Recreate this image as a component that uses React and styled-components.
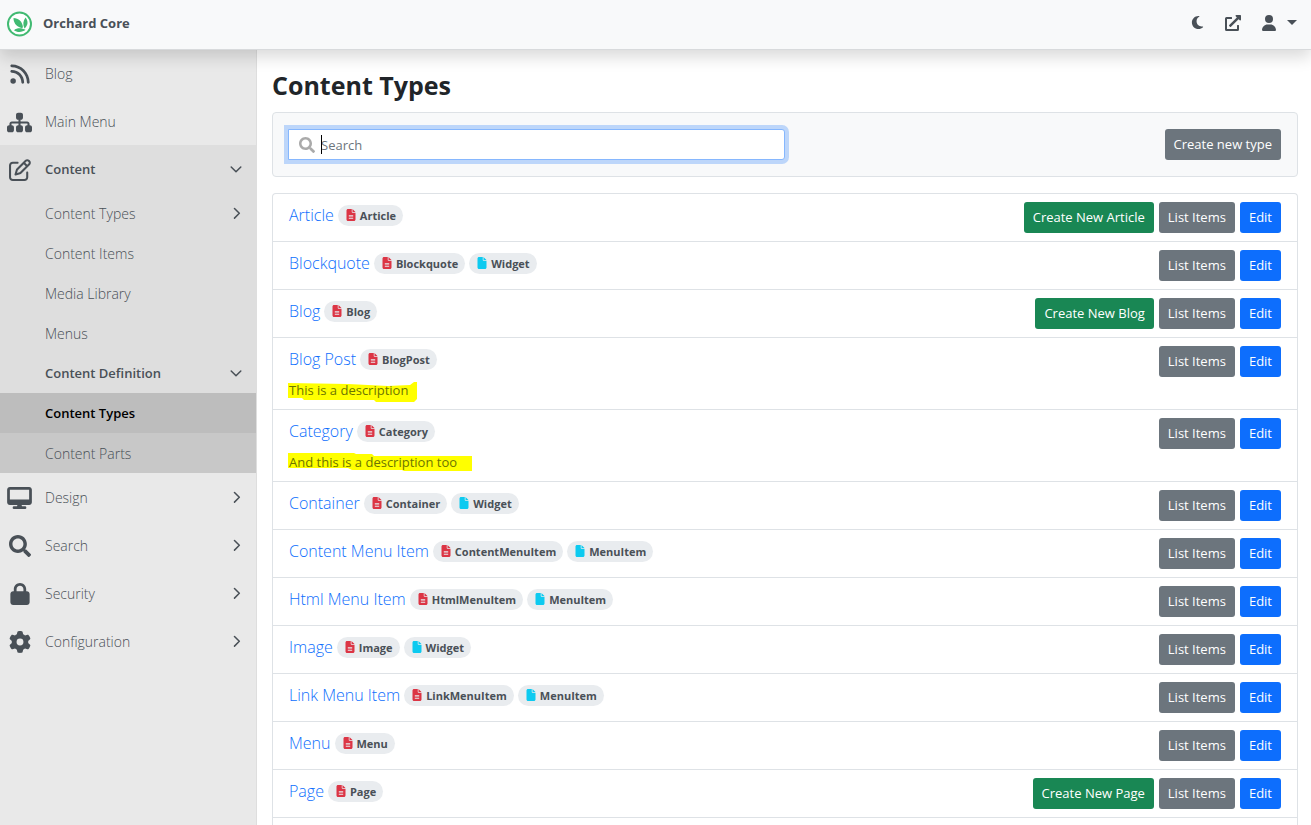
import React from "react";
import styled, { createGlobalStyle } from "styled-components";
import { FaSearch, FaExternalLinkAlt } from "react-icons/fa";
import {
  FaRss,
  FaSitemap,
  FaRegPenToSquare,
  FaLock,
  FaGear,
  FaMoon,
  FaUser,
  FaFile,
  FaFileLines,
} from "react-icons/fa6";

const colors = {
  text: "#212529",
  gray: "#495057",
  border: "#dee2e6",
  blue: "#0d6efd",
  secondary: "#6c757d",
  green: "#198754",
  red: "#dc3545",
  cyan: "#0dcaf0",
  light: "#f8f9fa",
};

const Logo = () => (
  <svg width="26" height="26" viewBox="0 0 26 26" aria-hidden="true">
    <circle cx="12.500" cy="13" r="11.500" fill="#fff" stroke="#41ba72" strokeWidth="2" />
    <path d="M6.500 7c5 0 9 3.500 9.500 9.500-1 .6-2 .5-3 0C9 15 6.500 11.500 6.500 7z" fill="#41ba72" />
    <path d="M18.500 6.500c2.800 3.500 2.800 7.500-1 11-1.800-3.500-1.600-7.500 1-11z" fill="#41ba72" />
    <path d="M7 19.200c2.800-2.600 8-2.600 11.500-.4-3 2.700-8.500 2.900-11.500.4z" fill="#41ba72" />
  </svg>
);

const Desktop = () => (
  <svg width="25" height="22" viewBox="0 0 576 512" fill="currentColor" aria-hidden="true">
    <path
      fillRule="evenodd"
      d="M64 0C28.700 0 0 28.700 0 64v288c0 35.300 28.700 64 64 64h176l-11 32h-69a32 32 0 0 0 0 64h256a32 32 0 0 0 0-64h-69l-11-32h176c35.300 0 64-28.700 64-64V64c0-35.300-28.700-64-64-64H64zM64 64h448v224H64V64z"
    />
  </svg>
);

const Chevron = ({ down }) => (
  <svg width="12" height="12" viewBox="0 0 12 12" fill="none" aria-hidden="true">
    <path
      d={down ? "M1.200 4L6 8.800 10.800 4" : "M4.500 1.500L9.300 6.300l-4.800 4.800"}
      stroke="currentColor"
      strokeWidth="1.500"
      strokeLinecap="round"
      strokeLinejoin="round"
    />
  </svg>
);

const contentLinks = [
  { label: "Content Types", more: true },
  { label: "Content Items" },
  { label: "Media Library" },
  { label: "Menus" },
];

const bottomLinks = [
  { label: "Design", icon: <Desktop /> },
  { label: "Search", icon: <FaSearch size={22} /> },
  { label: "Security", icon: <FaLock size={22} /> },
  { label: "Configuration", icon: <FaGear size={22} /> },
];

const contentTypes = [
  { name: "Article", type: "Article", creatable: true },
  { name: "Blockquote", type: "Blockquote", stereotype: "Widget" },
  { name: "Blog", type: "Blog", creatable: true },
  {
    name: "Blog Post",
    type: "BlogPost",
    description: "This is a description",
    mark: "0,2 60,3 100,5 122,4 126,1 129,1 129,18 126,21 88,21 86,19 16,19 14,17 0,17",
  },
  {
    name: "Category",
    type: "Category",
    description: "And this is a description too",
    mark: "0,0 66,0 68,1 84,1 86,3 184,3 184,18 116,18 114,17 64,17 60,15 0,15",
  },
  { name: "Container", type: "Container", stereotype: "Widget" },
  { name: "Content Menu Item", type: "ContentMenuItem", stereotype: "MenuItem" },
  { name: "Html Menu Item", type: "HtmlMenuItem", stereotype: "MenuItem" },
  { name: "Image", type: "Image", stereotype: "Widget" },
  { name: "Link Menu Item", type: "LinkMenuItem", stereotype: "MenuItem" },
  { name: "Menu", type: "Menu" },
  { name: "Page", type: "Page", creatable: true },
];

const App = () => {
  return (
    <>
      <GlobalStyle />
      <Header>
        <Brand href="#">
          <Logo />
          Orchard Core
        </Brand>
        <HeaderActions>
          <IconButton aria-label="Toggle theme">
            <FaMoon size={15} />
          </IconButton>
          <IconLink href="#" aria-label="Visit site">
            <FaExternalLinkAlt size={16} />
          </IconLink>
          <IconButton aria-label="User menu">
            <FaUser size={16} />
            <svg width="10" height="5" viewBox="0 0 10 5" aria-hidden="true">
              <path d="M0 0h10L5 5z" fill="currentColor" />
            </svg>
          </IconButton>
        </HeaderActions>
      </Header>
      <Body>
        <Sidebar>
          <MenuLink href="#">
            <MenuIcon>
              <FaRss size={22} />
            </MenuIcon>
            <span>Blog</span>
          </MenuLink>
          <MenuLink href="#">
            <MenuIcon>
              <FaSitemap size={25} />
            </MenuIcon>
            <span>Main Menu</span>
          </MenuLink>
          <Group>
            <MenuLink href="#" $bold>
              <MenuIcon>
                <FaRegPenToSquare size={22} />
              </MenuIcon>
              <span>Content</span>
              <Chevron down />
            </MenuLink>
            {contentLinks.map((item) => (
              <SubLink href="#" key={item.label}>
                <span>{item.label}</span>
                {item.more && <Chevron />}
              </SubLink>
            ))}
            <SubLink href="#" $bold>
              <span>Content Definition</span>
              <Chevron down />
            </SubLink>
            <SubGroup>
              <SubLink href="#" $active $bold>
                <span>Content Types</span>
              </SubLink>
              <SubLink href="#">
                <span>Content Parts</span>
              </SubLink>
            </SubGroup>
          </Group>
          {bottomLinks.map((item) => (
            <MenuLink href="#" key={item.label}>
              <MenuIcon>{item.icon}</MenuIcon>
              <span>{item.label}</span>
              <Chevron />
            </MenuLink>
          ))}
        </Sidebar>
        <Main>
          <h1>Content Types</h1>
          <Toolbar>
            <SearchBox>
              <FaSearch size={16} />
              <input type="search" placeholder="Search" aria-label="Search" />
              <Caret />
            </SearchBox>
            <Button>Create new type</Button>
          </Toolbar>
          <List>
            {contentTypes.map((item) => (
              <Row key={item.name}>
                <Info>
                  <Title>
                    <a href="#">{item.name}</a>
                    <Badge $color={colors.red}>
                      <FaFileLines size={12} />
                      {item.type}
                    </Badge>
                    {item.stereotype && (
                      <Badge $color={colors.cyan}>
                        <FaFile size={12} />
                        {item.stereotype}
                      </Badge>
                    )}
                  </Title>
                  {item.description && (
                    <Description>
                      <svg width="186" height="22" aria-hidden="true">
                        <polygon points={item.mark} fill="#ffff00" />
                      </svg>
                      {item.description}
                    </Description>
                  )}
                </Info>
                <Actions>
                  {item.creatable && (
                    <Button $color={colors.green}>Create New {item.name}</Button>
                  )}
                  <Button>List Items</Button>
                  <Button $color={colors.blue}>Edit</Button>
                </Actions>
              </Row>
            ))}
          </List>
        </Main>
      </Body>
    </>
  );
};

export default App;

const GlobalStyle = createGlobalStyle`
  * {
    box-sizing: border-box;
  }
  body {
    margin: 0;
    background: #fff;
    color: ${colors.text};
    font-family: "Open Sans", "Noto Sans", sans-serif;
    font-size: 13px;
    line-height: 21px;
  }
  #root {
    min-height: 100vh;
    display: flex;
    flex-direction: column;
  }
  a {
    color: inherit;
    text-decoration: none;
  }
  button,
  input {
    font: inherit;
  }
`;

const Header = styled.header`
  position: relative;
  z-index: 1;
  display: flex;
  flex: none;
  align-items: center;
  justify-content: space-between;
  height: 49px;
  padding: 0 14px 2px 7px;
  background: ${colors.light};
  box-shadow: 0 1px 0 #d8dadc, 0 8px 16px rgba(0, 0, 0, 0.15);
`;

const Brand = styled.a`
  display: flex;
  align-items: center;
  gap: 10px;
  color: ${colors.gray};
  font-weight: 700;
`;

const HeaderActions = styled.div`
  display: flex;
  align-items: center;
  gap: 20px;
  padding-bottom: 2px;
  color: ${colors.gray};
`;

const IconButton = styled.button`
  display: flex;
  align-items: center;
  gap: 10px;
  padding: 0;
  border: 0;
  background: none;
  color: inherit;
`;

const IconLink = styled.a`
  display: flex;
`;

const Body = styled.div`
  display: flex;
  flex: 1;
`;

const Sidebar = styled.nav`
  flex: 0 0 257px;
  border-right: 1px solid #dedede;
  background: #e9e9e9;
  color: ${colors.gray};
`;

const MenuLink = styled.a`
  display: flex;
  align-items: center;
  height: 48px;
  padding-right: 14px;
  font-size: ${({ $bold }) => ($bold ? 13 : 14)}px;
  font-weight: ${({ $bold }) => ($bold ? 600 : 300)};

  > span + svg {
    margin-left: auto;
  }
`;

const MenuIcon = styled.div`
  display: flex;
  justify-content: center;
  width: 39px;
  margin-right: 6px;
  padding-top: 2px;
`;

const Group = styled.div`
  background: #dedede;
`;

const SubGroup = styled.div`
  background: #c8c8c8;
`;

const SubLink = styled.a`
  display: flex;
  align-items: center;
  justify-content: space-between;
  height: 40px;
  padding: 0 14px 0 45px;
  font-size: ${({ $bold }) => ($bold ? 13 : 14)}px;
  font-weight: ${({ $bold }) => ($bold ? 600 : 300)};
  background: ${({ $active }) => ($active ? "#bdbdbd" : "transparent")};
  color: ${({ $active }) => ($active ? "#000" : "inherit")};
`;

const Main = styled.main`
  display: flex;
  flex: 1;
  flex-direction: column;
  min-width: 0;
  padding: 19px 13px 0 15px;

  h1 {
    margin: 0 0 10px;
    font-size: 25px;
    line-height: 34px;
    font-weight: 700;
  }
`;

const Toolbar = styled.div`
  display: flex;
  align-items: center;
  justify-content: space-between;
  margin-bottom: 16px;
  padding: 16px 16px 16px 15px;
  border: 1px solid ${colors.border};
  border-radius: 4px;
  background: ${colors.light};
`;

const SearchBox = styled.label`
  position: relative;
  flex: 0 0 50%;

  svg {
    position: absolute;
    top: 8px;
    left: 11px;
    color: #aaa;
  }

  input {
    display: block;
    width: 100%;
    height: 31px;
    padding: 4px 8px 4px 32px;
    border: 1px solid #86b7fe;
    border-radius: 0 3px 3px 0;
    outline: none;
    background: #fff;
    box-shadow: 0 0 0 4px rgba(13, 110, 253, 0.25);
    color: ${colors.text};
  }

  input::placeholder {
    color: ${colors.secondary};
  }
`;

const Caret = styled.span`
  position: absolute;
  top: 6px;
  left: 33px;
  width: 1px;
  height: 19px;
  background: #000;
`;

const Button = styled.button`
  height: 31px;
  padding: 0 9px;
  border: 0;
  border-radius: 3px;
  background: ${({ $color }) => $color || colors.secondary};
  color: #fff;
  white-space: nowrap;
`;

const List = styled.ul`
  flex: 1;
  margin: 0;
  padding: 0;
  list-style: none;
  border: 1px solid ${colors.border};
  border-bottom: 0;
  border-radius: 4px 4px 0 0;
`;

const Row = styled.li`
  display: flex;
  align-items: flex-start;
  justify-content: space-between;
  padding: 8px 16px;
  border-bottom: 1px solid ${colors.border};
`;

const Info = styled.div`
  display: flex;
  flex-direction: column;
  gap: 6px;
`;

const Title = styled.div`
  display: flex;
  align-items: center;
  gap: 4px;
  height: 26px;

  a {
    color: ${colors.blue};
    font-size: 16px;
    line-height: 24px;
    font-weight: 300;
  }
`;

const Badge = styled.span`
  display: flex;
  align-items: center;
  gap: 3px;
  height: 21px;
  padding: 0 7px;
  border-radius: 11px;
  background: #e9ecef;
  color: ${colors.gray};
  font-size: 11px;
  font-weight: 700;

  svg {
    color: ${({ $color }) => $color};
  }
`;

const Description = styled.div`
  position: relative;
  height: 23px;
  line-height: 24px;
  color: #6c7500;

  svg {
    position: absolute;
    z-index: -1;
    top: 3px;
    left: -1px;
  }
`;

const Actions = styled.div`
  display: flex;
  gap: 5px;
`;
